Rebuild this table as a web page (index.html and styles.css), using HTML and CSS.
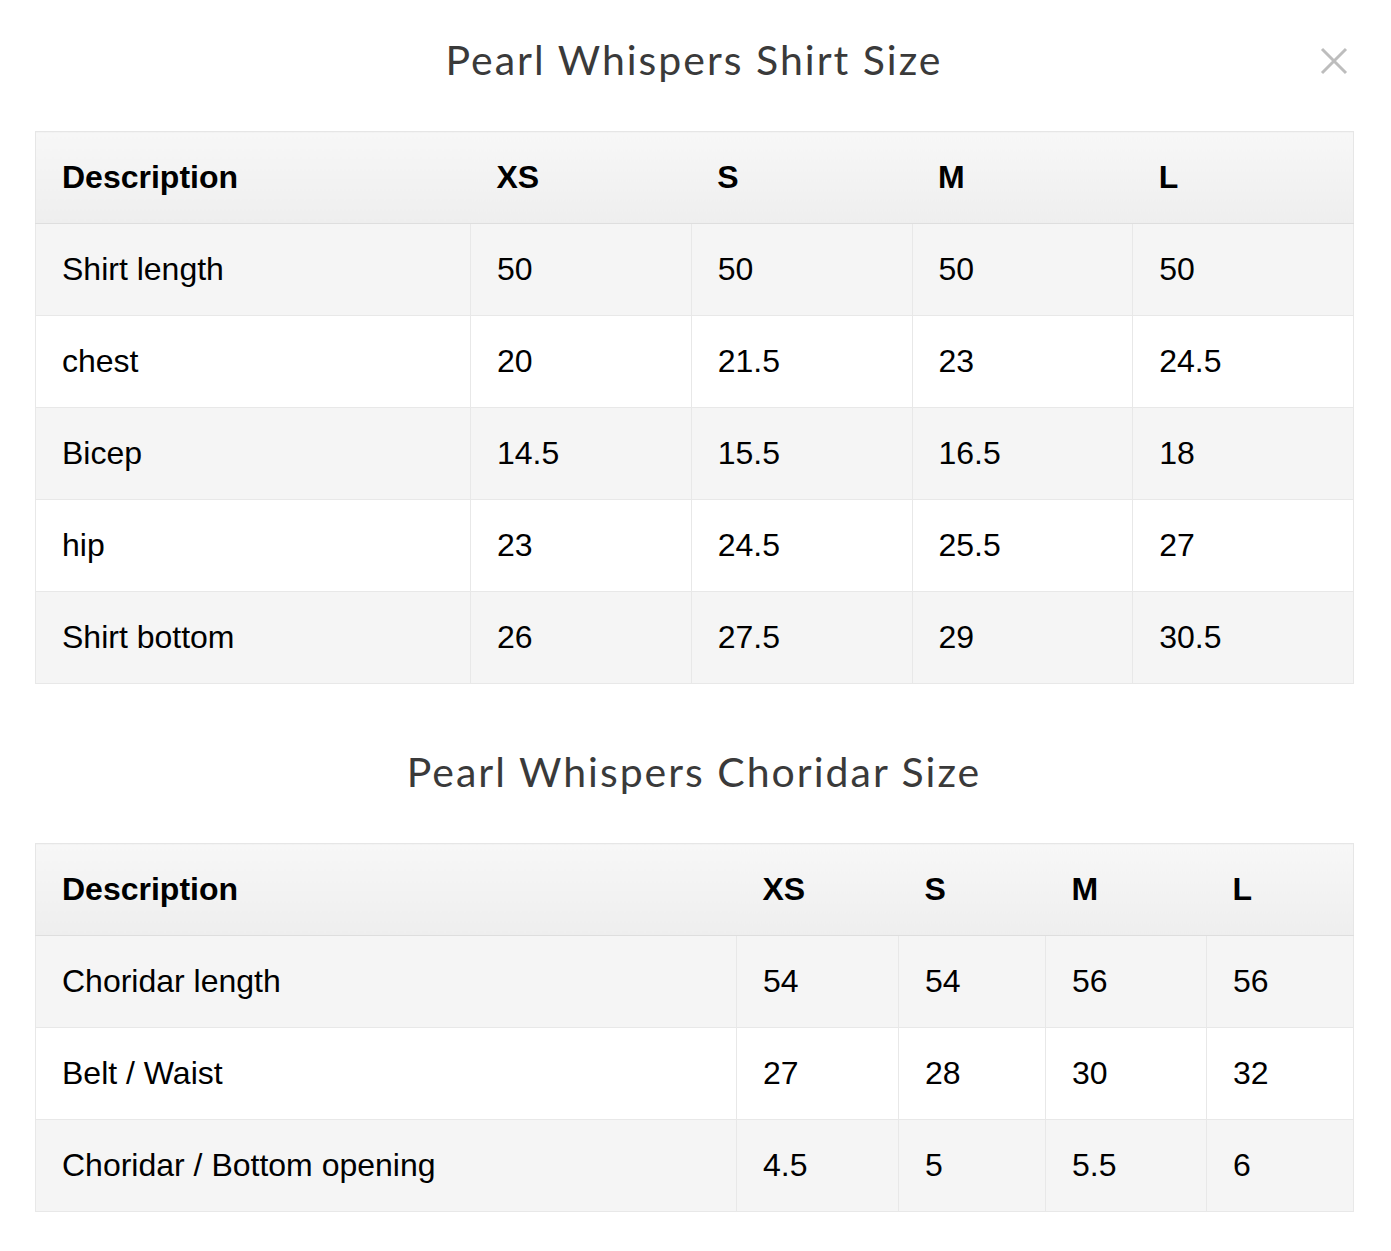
FILE: index.html
```html
<!DOCTYPE html>
<html>
<head>
<meta charset="utf-8">
<link rel="stylesheet" href="styles.css">
</head>
<body>
<div class="modal">
  <button class="close" aria-label="Close">
    <svg width="28" height="28" viewBox="0 0 28 28"><path d="M2 2 L26 26 M26 2 L2 26" stroke="#bdbdbd" stroke-width="3" fill="none"/></svg>
  </button>
  <h2 class="title">Pearl Whispers Shirt Size</h2>
  <table class="size-table shirt">
    <colgroup>
      <col class="c-desc"><col class="c-size"><col class="c-size"><col class="c-size"><col class="c-size">
    </colgroup>
    <thead>
      <tr><th>Description</th><th>XS</th><th>S</th><th>M</th><th>L</th></tr>
    </thead>
    <tbody>
      <tr><td>Shirt length</td><td>50</td><td>50</td><td>50</td><td>50</td></tr>
      <tr><td>chest</td><td>20</td><td>21.5</td><td>23</td><td>24.5</td></tr>
      <tr><td>Bicep</td><td>14.5</td><td>15.5</td><td>16.5</td><td>18</td></tr>
      <tr><td>hip</td><td>23</td><td>24.5</td><td>25.5</td><td>27</td></tr>
      <tr><td>Shirt bottom</td><td>26</td><td>27.5</td><td>29</td><td>30.5</td></tr>
    </tbody>
  </table>
  <h2 class="title second">Pearl Whispers Choridar Size</h2>
  <table class="size-table choridar">
    <colgroup>
      <col class="k1"><col class="k2"><col class="k3"><col class="k4"><col class="k5">
    </colgroup>
    <thead>
      <tr><th>Description</th><th>XS</th><th>S</th><th>M</th><th>L</th></tr>
    </thead>
    <tbody>
      <tr><td>Choridar length</td><td>54</td><td>54</td><td>56</td><td>56</td></tr>
      <tr><td>Belt / Waist</td><td>27</td><td>28</td><td>30</td><td>32</td></tr>
      <tr><td>Choridar / Bottom opening</td><td>4.5</td><td>5</td><td>5.5</td><td>6</td></tr>
    </tbody>
  </table>
</div>
</body>
</html>
```
FILE: styles.css
```css
html, body {
  margin: 0;
  padding: 0;
  background: #fff;
}
.modal {
  position: relative;
  padding: 0 38px 40px 35px;
}
.close {
  position: absolute;
  top: 47px;
  right: 43px;
  width: 28px;
  height: 28px;
  padding: 0;
  border: 0;
  background: transparent;
  cursor: pointer;
}
.close svg { display: block; }
.title {
  margin: 0;
  padding: 35px 0 46px;
  text-align: center;
  font-family: Lato, "Open Sans", sans-serif;
  font-weight: 400;
  font-size: 41px;
  line-height: 50px;
  letter-spacing: 2px;
  color: #3a3a3a;
}
.title.second {
  padding: 63px 0 46px;
}
.size-table {
  width: 1318px;
  table-layout: fixed;
  border-collapse: collapse;
  border: 1px solid #e6e6e6;
  font-family: "Liberation Sans", Arial, sans-serif;
  font-size: 32px;
  color: #000;
}
.size-table th,
.size-table td {
  text-align: left;
  padding: 27px 26px;
  line-height: 37px;
  white-space: nowrap;
}
.size-table th {
  font-weight: 700;
  background: linear-gradient(#f7f7f7, #eeeeee);
  border-bottom: 1px solid #dedede;
}
.size-table td {
  font-weight: 400;
  border: 1px solid #e8e8e8;
}
.size-table tbody tr:nth-child(odd) td { background: #f5f5f5; }
.size-table tbody tr:nth-child(even) td { background: #fff; }
.shirt .c-desc { width: 435px; }
.shirt .c-size { width: 220.75px; }
.choridar .k1 { width: 701px; }
.choridar .k2 { width: 162px; }
.choridar .k3 { width: 147px; }
.choridar .k4 { width: 161px; }
.choridar .k5 { width: 147px; }
```
